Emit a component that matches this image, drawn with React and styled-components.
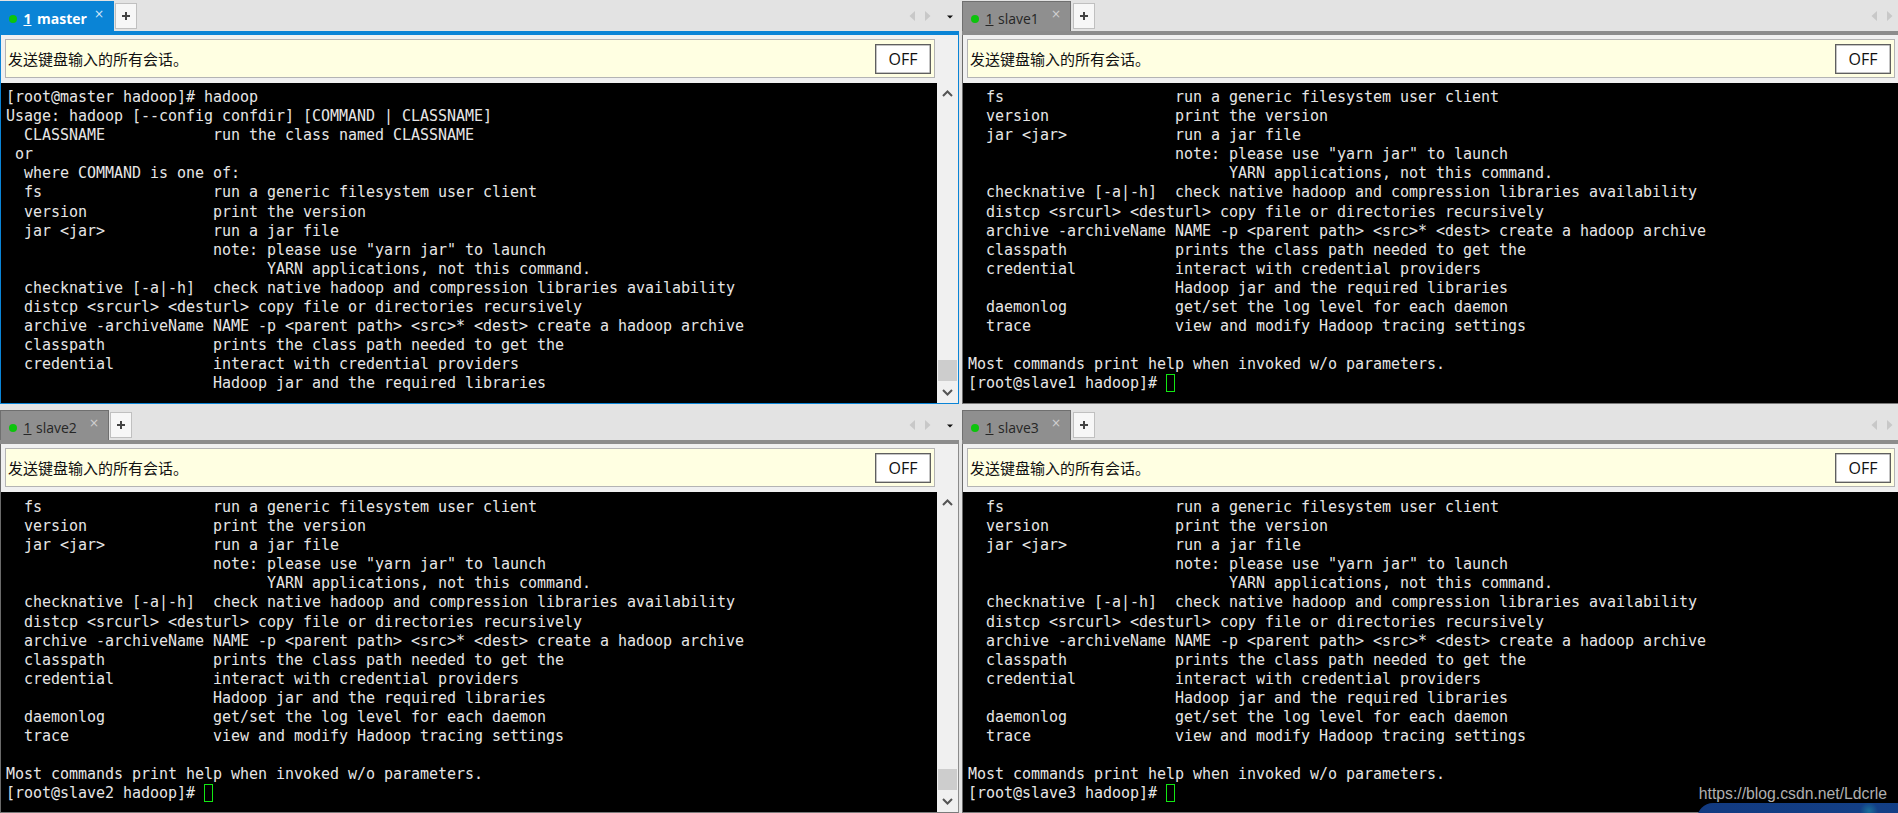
import React from "react";
import styled, { createGlobalStyle } from "styled-components";

const Global = createGlobalStyle`
  html, body { margin: 0; padding: 0; background: #e3e3e3; overflow: hidden; }
`;
const Page = styled.div`
  position: relative;
  width: 1898px;
  height: 813px;
  display: grid;
  grid-template-columns: 959px 936px;
  grid-template-rows: 404px 403px;
  column-gap: 3px;
  row-gap: 6px;
  overflow: hidden;
  background: #e3e3e3;
`;
const Pane = styled.section`
  display: flex;
  flex-direction: column;
  min-width: 0;
  min-height: 0;
`;
const TabBar = styled.div`
  flex: 0 0 30px;
  margin-top: ${p => (p.$row === 0 ? "1px" : "0")};
  display: flex;
  align-items: flex-start;
  background: #e3e3e3;
  padding-right: ${p => (p.$right ? "3px" : "0")};
`;
const Tab = styled.div`
  box-sizing: border-box;
  width: ${p => (p.$active ? "114px" : "109px")};
  height: 30px;
  display: flex;
  align-items: center;
  padding: 4px 0 0 8px;
  position: relative;
  background: ${p => (p.$active ? "#0a84d6" : "#8f8f8f")};
  border: 1px solid ${p => (p.$active ? "#0a84d6" : "#6f6f6f")};
  border-bottom: 0;
  font: ${p => (p.$active ? 700 : 400)} 14px "Open Sans", "Noto Sans", sans-serif;
  color: ${p => (p.$active ? "#fff" : "#262626")};
`;
const Dot = styled.span`
  width: 8px;
  height: 8px;
  border-radius: 50%;
  background: #0cc40c;
  margin: 0 6px 0 0;
`;
const Num = styled.span`
  display: inline-block;
  width: 9px;
  text-align: center;
  text-decoration: underline;
  margin-right: ${p => (p.$active ? "5px" : "4px")};
`;
const Close = styled.span`
  position: absolute;
  right: 9px;
  top: 5px;
  font: 400 12px "DejaVu Sans", sans-serif;
  color: ${p => (p.$active ? "#cfe6f7" : "#d0d0d0")};
`;
const Plus = styled.div`
  box-sizing: border-box;
  width: 22px;
  height: 26px;
  margin: 2px 0 0 ${p => (p.$right ? "2px" : "1px")};
  background: #f7f7f7;
  border: 1px solid #c0c0c0;
  display: flex;
  align-items: center;
  justify-content: center;
`;
const Spacer = styled.div`flex: 1;`;
const Rule = styled.div`
  flex: 0 0 4px;
  background: ${p => (p.$active ? "#0a84d6" : "#8c8c8c")};
`;
const Body = styled.div`
  flex: 1;
  min-height: 0;
  display: flex;
  flex-direction: column;
  border-left: 1px solid ${p => (p.$active ? "#0a84d6" : "#6a6a6a")};
  border-right: ${p => (p.$right ? "0" : `1px solid ${p.$active ? "#0a84d6" : "#8c8c8c"}`)};
  border-bottom: 1px solid ${p => (p.$active ? "#0a84d6" : "#7a7a7a")};
`;
const Notice = styled.div`
  flex: 0 0 48px;
  box-sizing: border-box;
  background: #f0f0f0;
  padding: 4px ${p => (p.$right ? "3px" : "23px")} 5px 4px;
`;
const NoticeBox = styled.div`
  box-sizing: border-box;
  height: 39px;
  background: #ffffe2;
  border: 1px solid #b4b4b4;
  display: flex;
  align-items: center;
  justify-content: space-between;
  padding: 0 3px 0 2px;
  font: 400 15px "Noto Sans CJK SC", sans-serif;
  color: #111;
`;
const OffButton = styled.div`
  box-sizing: border-box;
  width: 56px;
  height: 30px;
  background: #fff;
  border: 1px solid #5f5f5f;
  box-shadow: inset 0 0 0 0.5px #8a8a8a;
  display: flex;
  align-items: center;
  justify-content: center;
  font: 400 16px "Open Sans", sans-serif;
  color: #111;
`;
const Main = styled.div`
  flex: 1;
  min-height: 0;
  display: flex;
`;
const Terminal = styled.pre`
  flex: 1;
  min-width: 0;
  margin: 0;
  padding: ${p => (p.$row === 0 ? "5px" : "6px")} 0 0 5px;
  background: #000;
  color: #e6e6e6;
  font: 400 15px/19.1px "DejaVu Sans Mono", monospace;
  letter-spacing: -0.03px;
  overflow: hidden;
`;
const Cursor = styled.span`
  display: inline-block;
  box-sizing: border-box;
  width: 9px;
  height: 18px;
  border: 1px solid #12e812;
  vertical-align: -4px;
`;
const Scrollbar = styled.div`
  flex: 0 0 21px;
  background: #f0f0f0;
  position: relative;
`;
const Thumb = styled.div`
  position: absolute;
  left: 1px;
  right: 1px;
  bottom: 22px;
  height: 21px;
  background: #cdcdcd;
`;
const Chevron = styled.svg`
  position: absolute;
  left: 5px;
  ${p => (p.$up ? "top: 7px;" : "bottom: 7px;")}
`;
const Watermark = styled.div`
  position: absolute;
  right: 11px;
  top: 785px;
  font: 400 15.75px "Liberation Sans", sans-serif;
  color: #b0b0b0;
  z-index: 3;
`;
const Badge = styled.div`
  position: absolute;
  left: 1697px;
  top: 803px;
  width: 220px;
  height: 30px;
  border-radius: 16px 0 0 0;
  background: radial-gradient(circle at 172px 8px, #1a6f9a 0, #133f86 9px, #123a80 100%);
  z-index: 2;
`;

const common = `  fs                   run a generic filesystem user client
  version              print the version
  jar <jar>            run a jar file
                       note: please use "yarn jar" to launch
                             YARN applications, not this command.
  checknative [-a|-h]  check native hadoop and compression libraries availability
  distcp <srcurl> <desturl> copy file or directories recursively
  archive -archiveName NAME -p <parent path> <src>* <dest> create a hadoop archive
  classpath            prints the class path needed to get the
  credential           interact with credential providers
                       Hadoop jar and the required libraries`;
const tail = `  daemonlog            get/set the log level for each daemon
  trace                view and modify Hadoop tracing settings

Most commands print help when invoked w/o parameters.
`;
const masterText = `[root@master hadoop]# hadoop
Usage: hadoop [--config confdir] [COMMAND | CLASSNAME]
  CLASSNAME            run the class named CLASSNAME
 or
  where COMMAND is one of:
${common}`;

const PANES = [
  { name: "master", row: 0, active: true, text: masterText },
  { name: "slave1", row: 0, right: true, text: `${common}\n${tail}[root@slave1 hadoop]# `, cursor: true },
  { name: "slave2", row: 1, text: `${common}\n${tail}[root@slave2 hadoop]# `, cursor: true },
  { name: "slave3", row: 1, right: true, text: `${common}\n${tail}[root@slave3 hadoop]# `, cursor: true },
];

const PlusIcon = () => (
  <svg width="10" height="10" viewBox="0 0 10 10">
    <path d="M5 1v8M1 5h8" stroke="#444" strokeWidth="2" />
  </svg>
);
const NavIcons = ({ dropdown }) => (
  <svg width={dropdown ? 50 : 24} height="30" viewBox={`0 0 ${dropdown ? 50 : 24} 30`}>
    <path d="M6 10v10l-5.5-5zM16 10v10l5.5-5z" fill="#c8c8c8" />
    {dropdown && <path d="M38 14.5h6l-3 3z" fill="#111" />}
  </svg>
);

function TerminalPane({ name, row, active, right, text, cursor }) {
  return (
    <Pane>
      <TabBar $row={row} $right={right}>
        <Tab $active={active}>
          <Dot />
          <Num $active={active}>1</Num>
          {name}
          <Close $active={active}>×</Close>
        </Tab>
        <Plus $right={right}><PlusIcon /></Plus>
        <Spacer />
        <NavIcons dropdown={!right} />
      </TabBar>
      <Rule $active={active} />
      <Body $active={active} $right={right}>
        <Notice $right={right}>
          <NoticeBox>
            发送键盘输入的所有会话。
            <OffButton>OFF</OffButton>
          </NoticeBox>
        </Notice>
        <Main>
          <Terminal $row={row}>{text}{cursor && <Cursor />}</Terminal>
          {!right && (
            <Scrollbar>
              <Chevron $up width="11" height="7" viewBox="0 0 11 7">
                <path d="M1 6l4.5-4.5L10 6" fill="none" stroke="#555" strokeWidth="2" />
              </Chevron>
              <Thumb />
              <Chevron width="11" height="7" viewBox="0 0 11 7">
                <path d="M1 1l4.5 4.5L10 1" fill="none" stroke="#555" strokeWidth="2" />
              </Chevron>
            </Scrollbar>
          )}
        </Main>
      </Body>
    </Pane>
  );
}

export default function App() {
  return (
    <Page>
      <Global />
      {PANES.map(p => <TerminalPane key={p.name} {...p} />)}
      <Watermark>https://blog.csdn.net/Ldcrle</Watermark>
      <Badge />
    </Page>
  );
}
